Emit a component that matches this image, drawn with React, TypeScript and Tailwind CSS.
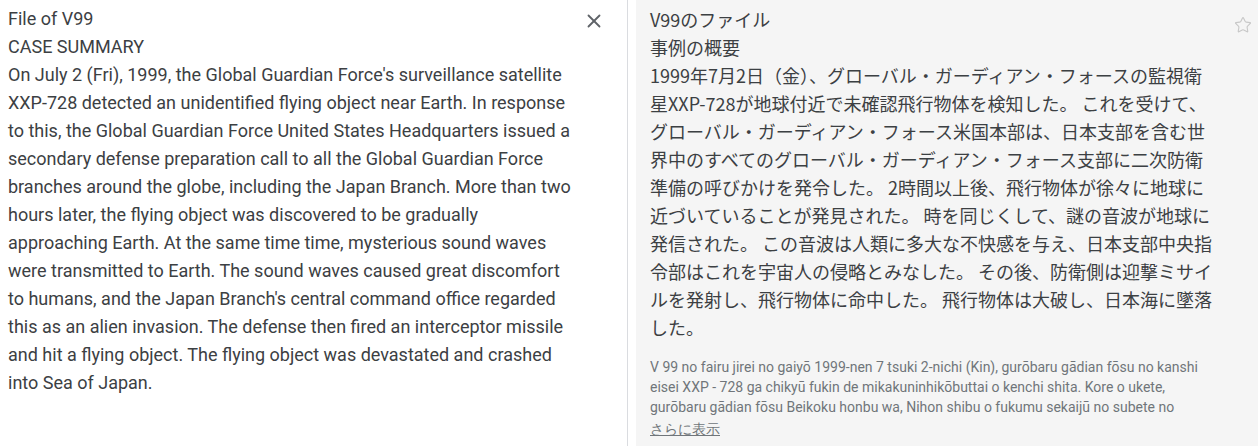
import { X, Star } from "lucide-react";

const source = `File of V99
CASE SUMMARY
On July 2 (Fri), 1999, the Global Guardian Force's surveillance satellite XXP-728 detected an unidentified flying object near Earth. In response to this, the Global Guardian Force United States Headquarters issued a secondary defense preparation call to all the Global Guardian Force branches around the globe, including the Japan Branch. More than two hours later, the flying object was discovered to be gradually approaching Earth. At the same time time, mysterious sound waves were transmitted to Earth. The sound waves caused great discomfort to humans, and the Japan Branch's central command office regarded this as an alien invasion. The defense then fired an interceptor missile and hit a flying object. The flying object was devastated and crashed into Sea of Japan.`;

// line breaks kept as in the rendered translation
const translated = [
  "V99のファイル",
  "事例の概要",
  "1999年7月2日（金）、グローバル・ガーディアン・フォースの監視衛",
  "星XXP-728が地球付近で未確認飛行物体を検知した。 これを受けて、",
  "グローバル・ガーディアン・フォース米国本部は、日本支部を含む世",
  "界中のすべてのグローバル・ガーディアン・フォース支部に二次防衛",
  "準備の呼びかけを発令した。 2時間以上後、飛行物体が徐々に地球に",
  "近づいていることが発見された。 時を同じくして、謎の音波が地球に",
  "発信された。 この音波は人類に多大な不快感を与え、日本支部中央指",
  "令部はこれを宇宙人の侵略とみなした。 その後、防衛側は迎撃ミサイ",
  "ルを発射し、飛行物体に命中した。 飛行物体は大破し、日本海に墜落",
  "した。",
];

const romaji = [
  "V 99 no fairu jirei no gaiyō 1999-nen 7 tsuki 2-nichi (Kin), gurōbaru gādian fōsu no kanshi",
  "eisei XXP - 728 ga chikyū fukin de mikakuninhikōbuttai o kenchi shita. Kore o ukete,",
  "gurōbaru gādian fōsu Beikoku honbu wa, Nihon shibu o fukumu sekaijū no subete no",
];

export default function App() {
  return (
    <div className="flex h-[446px] w-full bg-white font-['Roboto',sans-serif] text-[#3c4043]">
      {/* source panel */}
      <div className="flex w-[628px] shrink-0 border-r border-[#dadce0]">
        <div className="w-[574px] whitespace-pre-line pl-2 pt-[5px] text-[18px] leading-[28px]">
          {source}
        </div>
        <button
          aria-label="Clear source text"
          className="ml-[8px] mt-[9px] flex h-6 w-6 items-center justify-center text-[#5f6368]"
        >
          <X size={22} strokeWidth={2} />
        </button>
      </div>

      {/* translation panel */}
      <div className="ml-2 flex flex-1 bg-[#f5f5f5] pl-[14px] pt-[5px]">
        <div className="w-[580px]">
          <div className="font-['Noto_Sans_CJK_JP',sans-serif] text-[18px] leading-[28px] text-[#3c4043]">
            {translated.map((line, i) => (
              <div key={i} className="whitespace-nowrap">
                {line}
              </div>
            ))}
          </div>
          <div className="mt-[16px] text-[14px] leading-[20px] text-[#70757a]">
            {romaji.map((line, i) => (
              <div key={i} className="whitespace-nowrap">
                {line}
              </div>
            ))}
          </div>
          <a href="#" className="text-[14px] leading-[20px] text-[#70757a] underline">
            さらに表示
          </a>
        </div>
        <button aria-label="Save translation" className="ml-auto mr-[6px] mt-[11px] h-[18px] w-[18px] text-[#c8c8c8]">
          <Star size={18} strokeWidth={1.5} />
        </button>
      </div>
    </div>
  );
}
